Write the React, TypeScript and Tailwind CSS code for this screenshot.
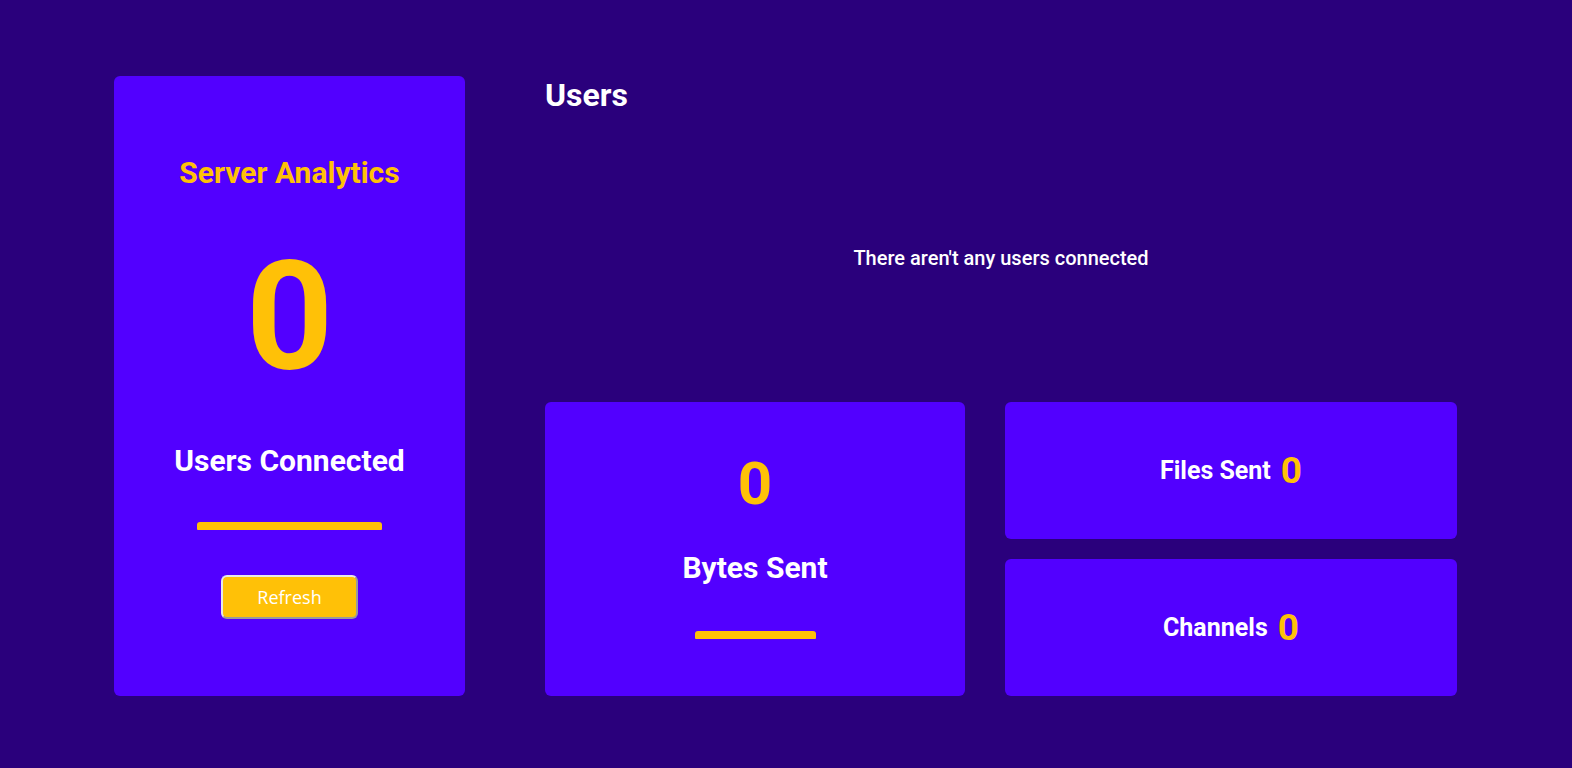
import React from "react";

export default function App() {
  const roboto = { fontFamily: "Roboto, 'Noto Sans', sans-serif" };
  return (
    <div className="min-h-[768px] w-full bg-[#2a007c]" style={roboto}>
      <div className="flex pl-[114px] pt-[76px] gap-[80px]">
        {/* Left card */}
        <div className="w-[351px] h-[620px] bg-[#5200ff] rounded-md flex flex-col items-center pt-[79px]">
          <div className="text-[30px] leading-[36px] font-bold text-[#ffc107]">Server Analytics</div>
          <div className="mt-[50px] text-[152px] leading-none font-bold text-[#ffc107]">0</div>
          <div className="mt-[50px] text-[30px] leading-[36px] font-bold text-white">Users Connected</div>
          <div className="mt-[43px] w-[185px] h-[8px] rounded-t-[3px] rounded-b-[1px] bg-[#ffc107]" />
          <button
            className="mt-[45px] w-[137px] h-[44px] rounded-md bg-[#ffc107] text-white text-[18px] border-2 border-t-[#e8e8e8] border-l-[#e8e8e8] border-r-[#9a9a9a] border-b-[#9a9a9a]"
            style={{ fontFamily: "'Open Sans', sans-serif" }}
          >
            Refresh
          </button>
        </div>

        {/* Right column */}
        <div className="w-[912px] h-[620px] flex flex-col">
          <div className="text-[32px] leading-[38px] font-bold text-white">Users</div>
          <div className="flex-1 flex items-center justify-center">
            <div className="text-[20px] font-medium text-white">There aren't any users connected</div>
          </div>
          <div className="flex gap-[40px] h-[294px]">
            <div className="w-[420px] bg-[#5200ff] rounded-md flex flex-col items-center pt-[52px]">
              <div className="text-[60px] leading-none font-bold text-[#ffc107]">0</div>
              <div className="mt-[36px] text-[30px] leading-[36px] font-bold text-white">Bytes Sent</div>
              <div className="mt-[45px] w-[121px] h-[8px] rounded-t-[3px] rounded-b-[1px] bg-[#ffc107]" />
            </div>
            <div className="flex-1 flex flex-col gap-[20px]">
              <div className="flex-1 bg-[#5200ff] rounded-md flex items-center justify-center gap-[10px]">
                <span className="text-[25px] font-bold text-white">Files Sent</span>
                <span className="text-[37px] leading-none font-bold text-[#ffc107]">0</span>
              </div>
              <div className="flex-1 bg-[#5200ff] rounded-md flex items-center justify-center gap-[10px]">
                <span className="text-[25px] font-bold text-white">Channels</span>
                <span className="text-[37px] leading-none font-bold text-[#ffc107]">0</span>
              </div>
            </div>
          </div>
        </div>
      </div>
    </div>
  );
}
